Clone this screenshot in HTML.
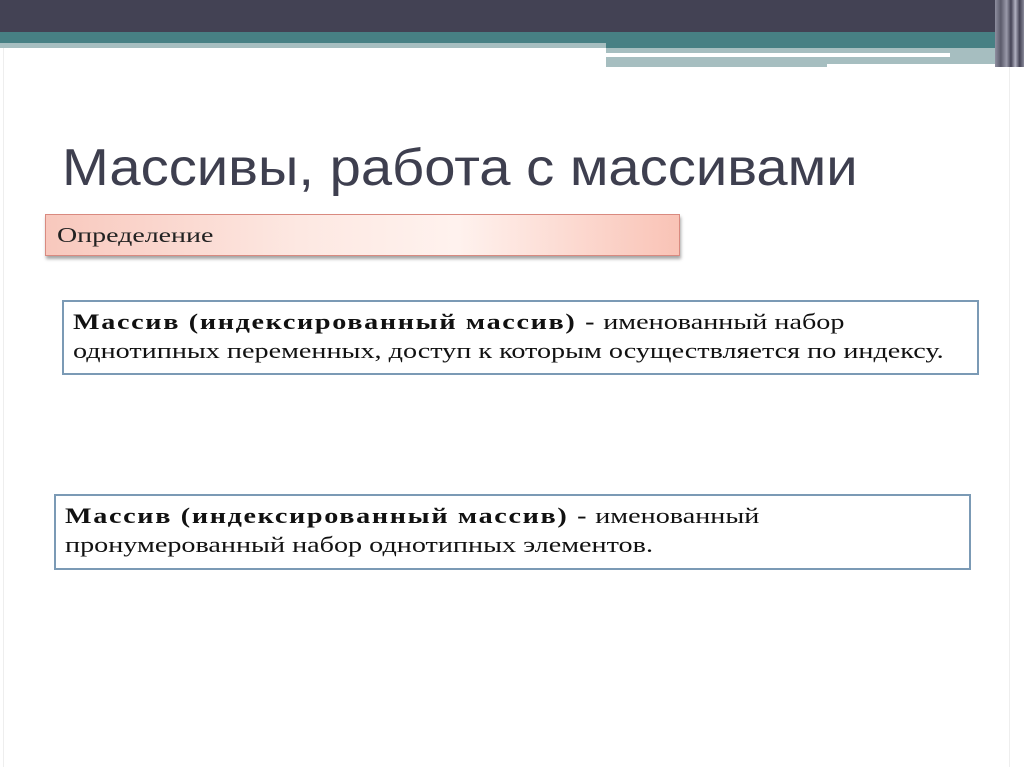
<!DOCTYPE html>
<html><head><meta charset="utf-8"><style>
body{margin:0;width:1024px;height:767px;background:#fff;position:relative;overflow:hidden;font-family:"Liberation Serif",serif}
div{position:absolute}
.t{font-family:"Liberation Sans",sans-serif;font-size:52px;color:#3e3f4f;left:62px;top:138px;transform:scaleX(1.08);transform-origin:left;white-space:nowrap}
.box{border:2px solid #7b9ab5;background:#fff;box-sizing:border-box}
.in{position:absolute;left:9px;top:5px;font-size:22px;line-height:29px;color:#111;transform:scaleX(1.28);transform-origin:left top;white-space:nowrap}
.in b{letter-spacing:1.3px}
</style></head><body>
<div style="left:0;top:0;width:1024px;height:32px;background:#434254"></div>
<div style="left:0;top:32px;width:1024px;height:11px;background:#478084"></div>
<div style="left:0;top:43px;width:606px;height:5px;background:#a6bec0"></div>
<div style="left:606px;top:43px;width:400px;height:5px;background:#478084"></div>
<div style="left:606px;top:48px;width:400px;height:19px;background:#a6bec0"></div>
<div style="left:606px;top:53px;width:344px;height:4px;background:#fff"></div>
<div style="left:827px;top:64px;width:180px;height:3px;background:#fff"></div>
<div style="left:995px;top:0;width:29px;height:67px;background:linear-gradient(90deg,#8f8fa0,#5a5a6a 20%,#9a9aaa 40%,#434254 55%,#b0b0c0 70%,#434254 85%,#8a8a9a)"></div>
<div style="left:3px;top:48px;width:1px;height:719px;background:#eee"></div>
<div style="left:1009px;top:67px;width:1px;height:700px;background:#eee"></div>
<div class="t">Массивы, работа с массивами</div>
<div style="left:45px;top:214px;width:635px;height:42px;border:1px solid #d98a80;box-sizing:border-box;background:linear-gradient(90deg,#f8c8bd,#fde8e2 40%,#fff2ee 65%,#f9c3b6);box-shadow:1px 3px 3px rgba(0,0,0,.35)"><div style="left:11px;top:0;font-size:21px;line-height:40px;color:#222;transform:scaleX(1.33);transform-origin:left;white-space:nowrap">Определение</div></div>
<div class="box" style="left:62px;top:300px;width:917px;height:75px"><div class="in"><b>Массив (индексированный массив) -</b> именованный набор<br>однотипных переменных, доступ к которым осуществляется по индексу.</div></div>
<div class="box" style="left:54px;top:494px;width:917px;height:76px"><div class="in"><b>Массив (индексированный массив) -</b> именованный<br>пронумерованный набор однотипных элементов.</div></div>
</body></html>
